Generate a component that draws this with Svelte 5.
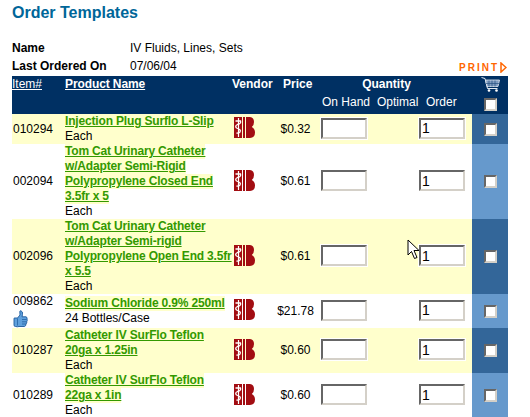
<script lang="ts">
	const rows = [
		{ item: '010294', name: 'Injection Plug Surflo L-Slip', unit: 'Each', price: '$0.32' },
		{ item: '002094', name: 'Tom Cat Urinary Catheter w/Adapter Semi-Rigid Polypropylene Closed End 3.5fr x 5', unit: 'Each', price: '$0.61' },
		{ item: '002096', name: 'Tom Cat Urinary Catheter w/Adapter Semi-rigid Polypropylene Open End 3.5fr x 5.5', unit: 'Each', price: '$0.61' },
		{ item: '009862', name: 'Sodium Chloride 0.9% 250ml', unit: '24 Bottles/Case', price: '$21.78', liked: true },
		{ item: '010287', name: 'Catheter IV SurFlo Teflon 20ga x 1.25in', unit: 'Each', price: '$0.60' },
		{ item: '010289', name: 'Catheter IV SurFlo Teflon 22ga x 1in', unit: 'Each', price: '$0.60' }
	];
</script>

<div class="page">
	<h1>Order Templates</h1>

	<div class="meta">
		<span class="label">Name</span>
		<span>IV Fluids, Lines, Sets</span>
		<span></span>
		<span class="label">Last Ordered On</span>
		<span>07/06/04</span>
		<span class="print">
			PRINT
			<svg width="7" height="11" viewBox="0 0 7 11"><path d="M1 1 L6 5.5 L1 10 Z" fill="none" stroke="#ff6600" stroke-width="1.5" /></svg>
		</span>
	</div>

	<table>
		<colgroup>
			<col style="width: 52px" />
			<col style="width: 168px" />
			<col style="width: 40px" />
			<col style="width: 49px" />
			<col style="width: 46px" />
			<col style="width: 52px" />
			<col style="width: 53px" />
			<col style="width: 36px" />
		</colgroup>
		<thead>
			<tr>
				<th class="item-head"><a href="#item" class="plain">Item#</a></th>
				<th class="product"><a href="#name">Product Name</a></th>
				<th class="vendor">Vendor</th>
				<th class="price-head">Price</th>
				<th colspan="3" class="qty">Quantity</th>
				<th class="check cart">
					<svg width="20" height="15" viewBox="0 0 20 15">
						<path d="M0.5 0.5 L4 1.5 L6.5 11.5 L16.5 11.5" fill="none" stroke="#e4ebf2" stroke-width="1" />
						<path d="M4.5 3 L18.5 3 L17 9.5 L6 9.5 Z" fill="#7f9cc0" stroke="#e4ebf2" stroke-width="0.8" />
						<path d="M8 3.5 V9.5 M11 3.5 V9.5 M14 3.5 V9.5 M5 6.5 H18" stroke="#27507f" stroke-width="0.7" />
						<circle cx="8" cy="13.5" r="1.3" fill="#fff" />
						<circle cx="15.5" cy="13.5" r="1.3" fill="#fff" />
					</svg>
				</th>
			</tr>
			<tr>
				<th colspan="4"></th>
				<th class="sub">On Hand</th>
				<th class="sub optimal">Optimal</th>
				<th class="sub order">Order</th>
				<th class="check"><input type="checkbox" /></th>
			</tr>
		</thead>
		<tbody>
			{#each rows as row, i}
				<tr class:alt={i % 2 === 0}>
					<td class="item">
						{row.item}
						{#if row.liked}
							<svg class="thumb" width="15" height="18" viewBox="0 0 15 18">
								<path d="M1 8.5 Q0.5 8 2 8 L4.5 8 L7 5 L6.8 1.5 Q7 0.5 8 0.8 Q10 1.5 9.5 4.5 L9 6.8 H13 Q14.6 7.4 14 9 Q14.6 10.5 13.8 11.5 Q14 13 13 14 Q13 16 11.5 16.5 H6 Q4.5 17 2.5 16.5 Q1 16.5 1 15 Z" fill="#5fa0dc" stroke="#1d5a9c" stroke-width="0.9" />
								<path d="M9 9.5 H13.5 M9 11.8 H13.5 M9 14 H12.8 M4.5 8.5 V15.5" fill="none" stroke="#1d5a9c" stroke-width="0.7" />
							</svg>
						{/if}
					</td>
					<td class="product">
						<a href="#product">{row.name}</a>
						<div>{row.unit}</div>
					</td>
					<td class="logo">
						<svg width="21" height="21" viewBox="0 0 21 21">
							<path d="M0 0 H8 V21 H0 Z" fill="#a20d12" />
							<path d="M9 0 H11 V21 H9 Z" fill="#a20d12" />
							<path d="M12 0 H16 Q20 0.5 20 5 Q20 8.5 17.8 10 Q21 11.5 21 15.5 Q21 20.5 16 21 H12 Z" fill="#a20d12" />
							<path d="M4.5 1 V20" stroke="#fff" stroke-width="1.2" />
							<path d="M1.5 4 H6.5 Q7.5 6.5 3.5 7.5 Q0.5 9 2.5 11 Q7.5 12.5 6 15 Q4.5 16.5 2.5 16" fill="none" stroke="#fff" stroke-width="1.3" />
						</svg>
					</td>
					<td class="price">{row.price}</td>
					<td><input class="box" type="text" /></td>
					<td></td>
					<td><input class="box" type="text" value="1" /></td>
					<td class="check"><input type="checkbox" /></td>
				</tr>
			{/each}
		</tbody>
	</table>

	<svg class="cursor" width="13" height="21" viewBox="0 0 13 21">
		<path d="M1 1 L1 16 L4.5 12.5 L7.5 19.5 L10 18.5 L7 11.5 L12 11.5 Z" fill="#fff" stroke="#000" stroke-width="1" />
	</svg>
</div>

<style>
	:global(body) {
		overflow: hidden;
		background: #fff;
	}

	.page {
		position: relative;
		height: 417px;
		overflow: hidden;
		padding-left: 12px;
		font-family: 'Liberation Sans', Arial, sans-serif;
		font-size: 12px;
		line-height: 15px;
		color: #000;
	}

	h1 {
		margin: 0;
		padding-top: 4px;
		height: 36px;
		box-sizing: border-box;
		font-size: 16px;
		line-height: 18px;
		font-weight: bold;
		color: #006699;
	}

	.meta {
		display: grid;
		grid-template-columns: 118px 1fr auto;
		grid-auto-rows: 18px;
		width: 496px;
		padding-top: 2px;
		padding-bottom: 2px;
		margin-top: 1px;
		margin-bottom: -1px;
		align-items: center;
	}

	.label {
		font-weight: bold;
	}

	.print {
		display: flex;
		align-items: center;
		gap: 1px;
		font-size: 10px;
		font-weight: bold;
		letter-spacing: 2px;
		color: #ff6600;
		margin-right: 1px;
		padding-top: 2px;
	}

	table {
		width: 496px;
		table-layout: fixed;
		border-collapse: collapse;
	}

	th,
	td {
		padding: 0;
		text-align: left;
		vertical-align: middle;
	}

	thead {
		background: #003063;
		color: #fff;
	}

	thead tr {
		height: 19px;
	}

	thead tr:first-child th {
		vertical-align: top;
		padding-top: 1px;
	}

	thead a {
		color: #fff;
		letter-spacing: -0.1px;
	}

	.plain {
		font-weight: normal;
		letter-spacing: 0;
	}

	.item {
		padding-left: 1px;
		white-space: nowrap;
	}

	.product {
		padding-left: 1px;
	}

	.vendor {
		white-space: nowrap;
	}

	.price-head {
		padding-left: 11px;
	}

	.qty {
		text-align: center;
		padding-right: 20px;
	}

	.sub {
		font-weight: normal;
		white-space: nowrap;
		padding-left: 1px;
		vertical-align: top;
	}

	.optimal {
		padding-left: 10px;
	}

	.order {
		padding-left: 7px;
	}

	.cart {
		padding-left: 9px;
	}

	.cart svg {
		display: block;
	}

	.thumb {
		display: block;
		margin-top: 1px;
	}

	tbody .product a {
		font-weight: bold;
		color: #339900;
		background: #ffffcc;
		padding: 0 0 1px;
		letter-spacing: -0.17px;
	}

	tr.alt {
		background: #ffffcc;
	}

	.logo {
		padding-left: 2px;
		padding-bottom: 3px;
	}

	.logo svg {
		display: block;
	}

	.price {
		text-align: center;
		padding-right: 2px;
		white-space: nowrap;
	}

	.box {
		display: block;
		box-sizing: border-box;
		width: 46px;
		height: 21px;
		margin: 0 0 2px;
		padding: 0 1px;
		border: 2px solid;
		border-color: #666 #d4d0c8 #d4d0c8 #666;
		background: #fff;
		font-family: 'Liberation Sans', Arial, sans-serif;
		font-size: 14px;
		color: #000;
		outline: 1px solid #fff;
		outline-offset: 0;
	}

	.check {
		text-align: center;
	}

	tbody .check {
		background: #6699cc;
	}

	tbody .alt .check {
		background: #336699;
	}

	input[type='checkbox'] {
		appearance: none;
		display: block;
		box-sizing: border-box;
		width: 13px;
		height: 13px;
		margin: 0 auto;
		border: 2px solid;
		border-color: #666 #d4d0c8 #d4d0c8 #666;
		background: #fff;
	}

	.cursor {
		position: absolute;
		left: 407px;
		top: 239px;
	}
</style>
